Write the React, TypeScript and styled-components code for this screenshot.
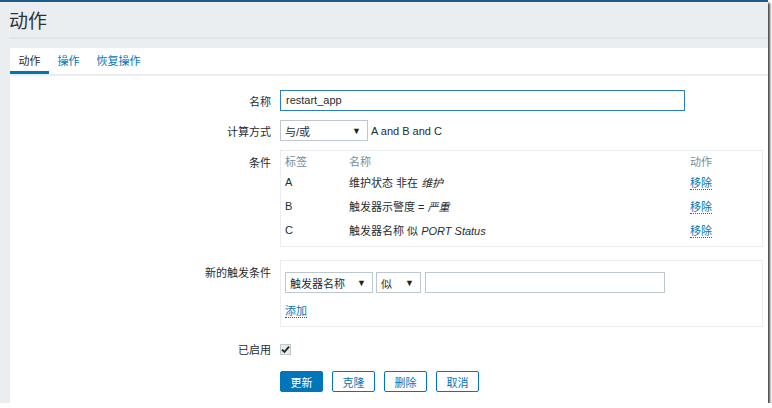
import React from 'react'
import styled, { createGlobalStyle } from 'styled-components'

const GlobalStyle = createGlobalStyle`
    html, body {
        margin: 0;
        padding: 0;
        background: #ffffff;
    }
    body {
        font-family: "Liberation Sans", "Noto Sans CJK SC", Arial, sans-serif;
        font-size: 11px;
        color: #1f2c33;
    }
`

const conditions = [
    { tag: 'A', name: '维护状态 非在 ', value: '维护' },
    { tag: 'B', name: '触发器示警度 = ', value: '严重' },
    { tag: 'C', name: '触发器名称 似 ', value: 'PORT Status' },
]

export default function App() {
    return (
        <>
            <GlobalStyle />
            <Page>
                <TopLine />
                <Header>
                    <Title>动作</Title>
                </Header>
                <Panel>
                    <Tabs>
                        <Tab $active>动作</Tab>
                        <Tab>操作</Tab>
                        <Tab>恢复操作</Tab>
                    </Tabs>
                    <Form>
                        <Row $gap={14}>
                            <Label>名称</Label>
                            <Field>
                                <TextInput $width={405} $focused>restart_app</TextInput>
                            </Field>
                        </Row>

                        <Row $gap={9}>
                            <Label>计算方式</Label>
                            <Field>
                                <Select $width={88}>
                                    <span>与/或</span>
                                    <Caret>▼</Caret>
                                </Select>
                                <Formula>A and B and C</Formula>
                            </Field>
                        </Row>

                        <Row $gap={9} $top>
                            <Label $top>条件</Label>
                            <Box $height={97}>
                                <CondTable>
                                    <thead>
                                        <tr>
                                            <Th $width={64}>标签</Th>
                                            <Th>名称</Th>
                                            <Th $width={68}>动作</Th>
                                        </tr>
                                    </thead>
                                    <tbody>
                                        {conditions.map((c) => (
                                            <tr key={c.tag}>
                                                <Td>{c.tag}</Td>
                                                <Td>
                                                    {c.name}
                                                    <i>{c.value}</i>
                                                </Td>
                                                <Td>
                                                    <Link>移除</Link>
                                                </Td>
                                            </tr>
                                        ))}
                                    </tbody>
                                </CondTable>
                            </Box>
                        </Row>

                        <Row $gap={13} $top>
                            <Label $top>新的触发条件</Label>
                            <Box $height={67} $pad>
                                <Inline>
                                    <Select $width={88}>
                                        <span>触发器名称</span>
                                        <Caret>▼</Caret>
                                    </Select>
                                    <Select $width={45}>
                                        <span>似</span>
                                        <Caret>▼</Caret>
                                    </Select>
                                    <TextInput $width={240} />
                                </Inline>
                                <AddRow>
                                    <Link>添加</Link>
                                </AddRow>
                            </Box>
                        </Row>

                        <Row $gap={14}>
                            <Label>已启用</Label>
                            <Field>
                                <Check>
                                    <svg width="9" height="9" viewBox="0 0 9 9">
                                        <path d="M1 4.6 L3.4 7 L8 1.6" fill="none" stroke="#222" strokeWidth="1.8" />
                                    </svg>
                                </Check>
                            </Field>
                        </Row>

                        <Row $gap={14}>
                            <span />
                            <Buttons>
                                <Button $primary>更新</Button>
                                <Button>克隆</Button>
                                <Button>删除</Button>
                                <Button>取消</Button>
                            </Buttons>
                        </Row>
                    </Form>
                </Panel>
            </Page>
        </>
    )
}

const Page = styled.div`
    width: 768px;
    height: 403px;
    background: #ebeef0;
    box-shadow: 2px 3px 2px rgba(40, 40, 40, 0.85);
    overflow: hidden;
`

const TopLine = styled.div`
    height: 2px;
    background: #1d5a8a;
`

const Header = styled.div`
    margin: 0 0 0 9px;
    height: 35px;
    border-bottom: 2px solid #e0e5e8;
    display: flex;
    align-items: center;
`

const Title = styled.h1`
    margin: 0;
    font-size: 19px;
    font-weight: normal;
    color: #2b3236;
`

const Panel = styled.div`
    margin: 9px 0 0 10px;
    background: #ffffff;
    height: 400px;
`

const Tabs = styled.div`
    display: flex;
    height: 26px;
    border-bottom: 2px solid #ebeef0;
`

const Tab = styled.div<{ $active?: boolean }>`
    padding: 0 8.5px;
    line-height: 27px;
    height: 26px;
    box-sizing: border-box;
    color: ${(p) => (p.$active ? '#1f2c33' : '#0275b8')};
    border-bottom: 3px solid ${(p) => (p.$active ? '#0275b8' : 'transparent')};
`

const Form = styled.div`
    display: flex;
    flex-direction: column;
    padding-right: 5px;
`

const Row = styled.div<{ $gap: number; $top?: boolean }>`
    display: grid;
    grid-template-columns: 261px 1fr;
    column-gap: 9px;
    align-items: ${(p) => (p.$top ? 'start' : 'center')};
    margin-top: ${(p) => p.$gap}px;
`

const Label = styled.div<{ $top?: boolean }>`
    text-align: right;
    padding-top: ${(p) => (p.$top ? 4 : 0)}px;
    color: #1f2c33;
`

const Field = styled.div`
    display: flex;
    align-items: center;
`

const TextInput = styled.div<{ $width: number; $focused?: boolean }>`
    width: ${(p) => p.$width}px;
    height: 21px;
    box-sizing: border-box;
    border: 1px solid ${(p) => (p.$focused ? '#2a7fc0' : '#bcc8cd')};
    padding: 0 5px;
    line-height: 19px;
    font-size: 11px;
    color: #1f2c33;
    background: #fff;
`

const Select = styled.div<{ $width: number }>`
    width: ${(p) => p.$width}px;
    height: 21px;
    box-sizing: border-box;
    border: 1px solid #bcc8cd;
    padding: 0 6px 0 4px;
    display: flex;
    align-items: center;
    justify-content: space-between;
    background: #fff;
    color: #1f2c33;
`

const Caret = styled.span`
    font-size: 9px;
    color: #222;
`

const Formula = styled.span`
    margin-left: 3px;
`

const Box = styled.div<{ $height: number; $pad?: boolean }>`
    width: 483px;
    height: ${(p) => p.$height}px;
    box-sizing: border-box;
    border: 1px solid #ebeef0;
    padding: ${(p) => (p.$pad ? '11px 4px 0' : '0 4px')};
`

const CondTable = styled.table`
    width: 100%;
    border-collapse: collapse;
`

const Th = styled.th<{ $width?: number }>`
    text-align: left;
    font-weight: normal;
    color: #768d99;
    height: 19px;
    padding: 0;
    width: ${(p) => (p.$width ? `${p.$width}px` : 'auto')};
`

const Td = styled.td`
    height: 24px;
    padding: 0;
    color: #1f2c33;
`

const Link = styled.span`
    color: #0275b8;
    border-bottom: 1px dotted #0275b8;
    cursor: pointer;
`

const Inline = styled.div`
    display: flex;
    gap: 3px;
    & > :last-child {
        margin-left: 1px;
    }
`

const AddRow = styled.div`
    margin-top: 9px;
`

const Check = styled.div`
    width: 11px;
    height: 11px;
    box-sizing: border-box;
    border: 1px solid #bcc8cd;
    background: #e8ebed;
    display: flex;
    align-items: center;
    justify-content: center;
`

const Buttons = styled.div`
    display: flex;
    gap: 9px;
`

const Button = styled.button<{ $primary?: boolean }>`
    height: 21px;
    width: 43px;
    padding: 0;
    font-family: inherit;
    font-size: 11px;
    border-radius: 2px;
    border: 1px solid #0275b8;
    background: ${(p) => (p.$primary ? '#0275b8' : '#ffffff')};
    color: ${(p) => (p.$primary ? '#ffffff' : '#0275b8')};
`
